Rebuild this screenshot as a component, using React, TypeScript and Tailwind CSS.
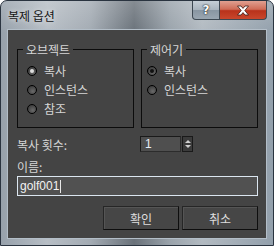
import React from "react";

const font = "font-['Noto_Sans_CJK_KR','Noto_Sans',sans-serif]";

function Radio({ checked, light }: { checked?: boolean; light?: boolean }) {
  return (
    <span className="flex h-[10px] w-[10px] shrink-0 items-center justify-center rounded-full border border-black bg-[radial-gradient(circle_at_60%_65%,#6a6a6a,#2e2e2e)]">
      {checked && (
        <span
          className={
            light
              ? "h-[4px] w-[4px] rounded-full bg-[#dedede]"
              : "h-[4px] w-[4px] rounded-full bg-[#111]"
          }
        />
      )}
    </span>
  );
}

function Option({ label, checked, light, pad }: { label: string; checked?: boolean; light?: boolean; pad: string }) {
  return (
    <div className={`flex h-[19px] items-center gap-[7px] ${pad}`}>
      <Radio checked={checked} light={light} />
      <span className="text-[12px] leading-[13px] text-[#d6d6d6]">{label}</span>
    </div>
  );
}

export default function App() {
  return (
    <div className={`${font} h-[246px] w-[274px] overflow-hidden`}>
      <div className="flex h-full w-full flex-col rounded-t-[7px] border border-[#2a3440] bg-[linear-gradient(180deg,rgba(255,255,255,0.18),rgba(255,255,255,0)_32px),linear-gradient(90deg,#97a1ab_0%,#b7bec5_17%,#a3abb3_33%,#6a727a_49%,#9aa3ab_62%,#b2bac1_74%,#93a0ac_100%)]">
        {/* title bar */}
        <div className="flex h-[28px] shrink-0 items-start justify-between pr-[6px]">
          <span className="pl-[7px] pt-[8px] text-[12px] leading-[14px] text-[#161616] [text-shadow:0_0_5px_rgba(255,255,255,0.85)]">
            복제 옵션
          </span>
          <div className="flex">
            <div className="flex h-[19px] w-[28px] items-center justify-center rounded-bl-[4px] border border-t-0 border-[#3d4852] bg-[linear-gradient(180deg,#c5ced6_0%,#a9b4be_48%,#8996a2_52%,#9aa6b1_100%)]">
              <span className="font-['DejaVu_Sans',sans-serif] text-[12px] font-bold leading-none text-white [text-shadow:0_0_1px_#000,0_0_2px_#222]">
                ?
              </span>
            </div>
            <div className="flex h-[19px] w-[47px] items-center justify-center rounded-br-[4px] border border-l-0 border-t-0 border-[#3d4852] bg-[linear-gradient(180deg,#e0a091_0%,#cf6c57_46%,#b9321b_54%,#c9472c_100%)]">
              <svg width="14" height="11" viewBox="0 0 14 11">
                <path
                  d="M1.5 1 H5 L7 3.4 L9 1 H12.5 L8.8 5.5 L12.5 10 H9 L7 7.6 L5 10 H1.5 L5.2 5.5 Z"
                  fill="#fff"
                  stroke="#3b1a14"
                  strokeWidth="0.8"
                  strokeLinejoin="round"
                />
              </svg>
            </div>
          </div>
        </div>

        {/* client area */}
        <div className="mx-[6px] mb-[6px] flex flex-1 flex-col border border-[#b3bec8] bg-[#444444] pl-[9px] pr-[8px] pt-[13px]">
          <div className="flex gap-[7px]">
            <fieldset className="h-[85px] min-w-0 flex-1 border border-[#0c0c0c]">
              <legend className="ml-[5px] px-[3px] text-[12px] leading-[13px] text-[#d6d6d6]">오브젝트</legend>
              <div className="pt-[5px]">
                <Option label="복사" checked light pad="pl-[9px]" />
                <Option label="인스턴스" pad="pl-[9px]" />
                <Option label="참조" pad="pl-[9px]" />
              </div>
            </fieldset>
            <fieldset className="h-[85px] min-w-0 flex-1 border border-[#0c0c0c]">
              <legend className="ml-[5px] px-[3px] text-[12px] leading-[13px] text-[#d6d6d6]">제어기</legend>
              <div className="pt-[5px]">
                <Option label="복사" checked pad="pl-[5px]" />
                <Option label="인스턴스" pad="pl-[5px]" />
              </div>
            </fieldset>
          </div>

          {/* copies */}
          <div className="mt-[8px] flex h-[16px] items-center">
            <span className="w-[123px] text-[12px] leading-[13px] text-[#d6d6d6]">복사 횟수:</span>
            <div className="flex h-[16px] w-[41px] items-center border border-[#1a1a1a] border-b-[#2c2c2c] border-r-[#2c2c2c] bg-[#4f4f4f] pl-[4px]">
              <span className="font-['Liberation_Sans',sans-serif] text-[12px] leading-none text-[#e4ecf6]">1</span>
            </div>
            <div className="ml-[1px] flex h-[16px] w-[11px] flex-col items-center justify-center gap-[2px] border border-[#1a1a1a] bg-[#3b3b3b]">
              <span className="h-0 w-0 border-x-[3px] border-b-[3px] border-x-transparent border-b-[#d0d0d0]" />
              <span className="h-0 w-0 border-x-[3px] border-t-[3px] border-x-transparent border-t-[#d0d0d0]" />
            </div>
          </div>

          {/* name */}
          <span className="mt-[8px] text-[12px] leading-[13px] text-[#d6d6d6]">이름:</span>
          <div className="mt-[3px] flex h-[20px] items-center border border-[#dbe6f0] bg-[#515151] pl-[2px]">
            <span className="font-['Liberation_Sans',sans-serif] text-[12px] leading-none text-[#f2f2f2]">golf001</span>
            <span className="ml-[1px] h-[13px] w-px bg-[#e8e8e8]" />
          </div>

          {/* buttons */}
          <div className="mt-[10px] flex justify-end gap-[3px]">
            <div className="flex h-[24px] w-[76px] items-center justify-center border border-[#262626] border-b-[#0e0e0e] border-r-[#0e0e0e] bg-[#464646] shadow-[inset_1px_1px_0_#555]">
              <span className="text-[12px] leading-[13px] text-[#dedede]">확인</span>
            </div>
            <div className="flex h-[24px] w-[76px] items-center justify-center border border-[#262626] border-b-[#0e0e0e] border-r-[#0e0e0e] bg-[#464646] shadow-[inset_1px_1px_0_#555]">
              <span className="text-[12px] leading-[13px] text-[#dedede]">취소</span>
            </div>
          </div>
        </div>
      </div>
    </div>
  );
}
